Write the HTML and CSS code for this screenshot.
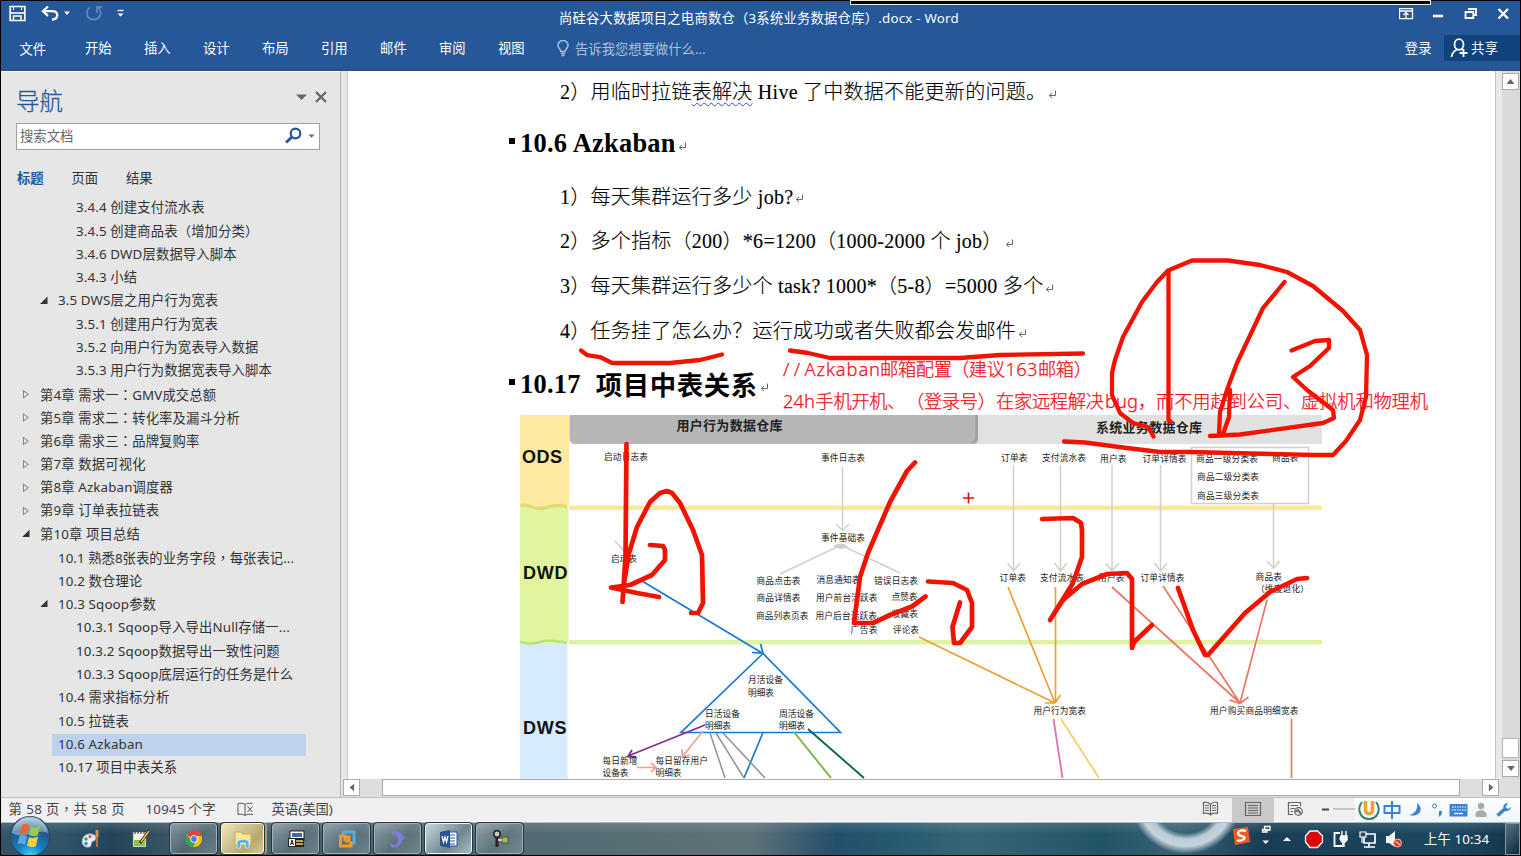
FILE: index.html
```html
<!DOCTYPE html>
<html lang="zh-CN">
<head>
<meta charset="utf-8">
<title>Word</title>
<link rel="stylesheet" href="styles.css">
</head>
<body>
<div class="window">
  <header class="titlebar">
    <svg class="quick" width="130" height="29" viewBox="1 1 130 29" fill="none" stroke="#fff">
      <path d="M10.200 6.500H24.800V20.500H10.200Z" stroke-width="1.700"/><path d="M10.500 13H24.500" stroke-width="1.600"/><path d="M13.500 20V16H21V20" stroke-width="1.500"/><path d="M13.500 7V10M21.500 7V10" stroke-width="1"/>
      <path d="M43.500 11.200H52C59 11.200 59 19 52 19.500" stroke-width="2.300"/><path d="M48 6.500L43 11.200L48 15.800" stroke-width="2.300"/>
      <path d="M64 11.500H70L67 15Z" fill="#fff" stroke="none"/>
      <path d="M90 7.500C85.500 10.500 86 18.500 92.500 19.500C101 20 103.500 10 97 7.500M97 13V7H102" stroke="#5f86bb" stroke-width="1.800"/>
      <path d="M117.500 10.500H123.500" stroke-width="1.300"/><path d="M117.500 13.500H123.500L120.500 16.500Z" fill="#fff" stroke="none"/>
    </svg>
    <div class="caption">尚硅谷大数据项目之电商数仓（3系统业务数据仓库）.docx - Word</div>
    <svg class="winbtns" width="121" height="29" viewBox="1399 1 121 29" fill="none" stroke="#fff">
      <path d="M1399.500 8.700H1412.500V18.700H1399.500ZM1400 11H1412" stroke-width="1.300"/><path d="M1406 18V12.500M1403.500 15L1406 12.500L1408.500 15" stroke-width="1.300"/>
      <path d="M1433 16H1443" stroke-width="2.600"/>
      <path d="M1468 9H1476V15H1473.500" stroke-width="1.800"/><path d="M1465.500 12H1473.300V18H1465.500Z" stroke-width="1.800"/>
      <path d="M1498.500 9L1508 18.500M1508 9L1498.500 18.500" stroke-width="2.300"/>
    </svg>
  </header>
  <nav class="ribbon">
    <span class="tab file">文件</span><span class="tab">开始</span><span class="tab">插入</span><span class="tab">设计</span><span class="tab">布局</span><span class="tab">引用</span><span class="tab">邮件</span><span class="tab">审阅</span><span class="tab">视图</span>
    <svg class="bulb" width="12" height="17" viewBox="0 0 12 17" fill="none" stroke="#a9c0df" stroke-width="1.500"><path d="M3.800 11.500C3.800 9 1 8.500 1 5.300A5 4.800 0 0 1 11 5.300C11 8.500 8.200 9 8.200 11.500ZM4 13.500H8M4.500 15.500H7.500"/></svg>
    <span class="tell">告诉我您想要做什么...</span>
    <span class="login">登录</span>
    <div class="share"><svg width="19" height="20" viewBox="0 0 19 20" fill="none" stroke="#fff" stroke-width="1.800"><ellipse cx="9" cy="6.500" rx="4.500" ry="5.300"/><path d="M1.500 19C2 15 4 13 7 11.500M11.500 10.500L13 12M13.500 11V19M9.500 15H17.500"/></svg>共享</div>
  </nav>

  <main class="main">
    <aside class="side">
      <div class="side-head"><span>导航</span>
        <svg width="34" height="14" viewBox="0 0 34 14"><path d="M2 4.500H13L7.500 10Z" fill="#666"/><path d="M22 2L32 12M32 2L22 12" stroke="#666" stroke-width="2.200"/></svg>
      </div>
      <div class="search"><span>搜索文档</span>
        <svg width="31" height="18" viewBox="0 0 31 18" fill="none"><circle cx="11.500" cy="6.500" r="4.800" stroke="#24569b" stroke-width="2.200"/><path d="M8 10L2 15.500" stroke="#24569b" stroke-width="2.800"/><path d="M24.500 7.500H30.500L27.500 10.800Z" fill="#666"/></svg>
      </div>
      <div class="views"><b>标题</b><span>页面</span><span>结果</span></div>
      <div class="tree">
        <div class="row l3">3.4.4 创建支付流水表</div>
        <div class="row l3">3.4.5 创建商品表<i lang="zh-TW">（</i>增加分类<i lang="zh-TW">）</i></div>
        <div class="row l3">3.4.6 DWD层数据导入脚本</div>
        <div class="row l3">3.4.3 小结</div>
        <div class="row l2 open">3.5 DWS层之用户行为宽表</div>
        <div class="row l3">3.5.1 创建用户行为宽表</div>
        <div class="row l3">3.5.2 向用户行为宽表导入数据</div>
        <div class="row l3">3.5.3 用户行为数据宽表导入脚本</div>
        <div class="row l1 shut">第4章 需求一<i lang="zh-TW">：</i>GMV成交总额</div>
        <div class="row l1 shut">第5章 需求二<i lang="zh-TW">：</i>转化率及漏斗分析</div>
        <div class="row l1 shut">第6章 需求三<i lang="zh-TW">：</i>品牌复购率</div>
        <div class="row l1 shut">第7章 数据可视化</div>
        <div class="row l1 shut">第8章 Azkaban调度器</div>
        <div class="row l1 shut">第9章 订单表拉链表</div>
        <div class="row l1 open">第10章 项目总结</div>
        <div class="row l2 snug">10.1 熟悉8张表的业务字段<i lang="zh-TW">，</i>每张表记...</div>
        <div class="row l2">10.2 数仓理论</div>
        <div class="row l2 open">10.3 Sqoop参数</div>
        <div class="row l3">10.3.1 Sqoop导入导出Null存储一...</div>
        <div class="row l3">10.3.2 Sqoop数据导出一致性问题</div>
        <div class="row l3">10.3.3 Sqoop底层运行的任务是什么</div>
        <div class="row l2">10.4 需求指标分析</div>
        <div class="row l2">10.5 拉链表</div>
        <div class="row l2 current">10.6 Azkaban</div>
        <div class="row l2">10.17 项目中表关系</div>
      </div>
    </aside>

    <section class="work">
      <svg width="0" height="0" class="defs"><symbol id="ret" viewBox="0 0 9 9"><path d="M7.500 0.500V5.500H1.500M4 3L1.200 5.500L4 8" fill="none" stroke="#666" stroke-width="1"/></symbol></svg>
      <div class="pane">
      <article class="page">
        <p class="para p1">2）用临时拉链<span class="wavy">表解决</span> Hive 了中数据不能更新的问题。<svg class="ret"><use href="#ret"/></svg></p>
        <h2 class="head h1">10.6 Azkaban<svg class="ret"><use href="#ret"/></svg></h2>
        <p class="para">1）每天集群运行多少 job?<svg class="ret"><use href="#ret"/></svg></p>
        <p class="para tall">2）多个指标（200）*6=1200（1000-2000 个 job）<svg class="ret"><use href="#ret"/></svg></p>
        <p class="para tall">3）每天集群运行多少个 task? 1000*（5-8）=5000 多个<svg class="ret"><use href="#ret"/></svg></p>
        <p class="para tall">4）任务挂了怎么办？运行成功或者失败都会发邮件<svg class="ret"><use href="#ret"/></svg></p>
        <h2 class="head h2">10.17<span class="zh">项目中表关系</span><svg class="ret"><use href="#ret"/></svg></h2>
        <svg class="diagram" width="802" height="364" viewBox="520 415 802 364">
          <rect x="569" y="505.500" width="753" height="4.500" fill="#fde7a0"/>
          <rect x="569" y="640" width="753" height="4.500" fill="#e0f3a5"/>
          <rect x="520" y="415" width="49" height="92" rx="2" fill="#fee9a0"/>
          <rect x="520" y="507" width="48.500" height="136" rx="2" fill="#e0f59d"/>
          <rect x="520" y="643" width="47.500" height="140" rx="2" fill="#d7ebff"/>
          <path d="M520 506Q526 504 532 507T548 507T567 507" stroke="#e3dc74" stroke-width="3.500" fill="none"/>
          <path d="M520 642Q530 645 540 642T567 643" stroke="#b8e37c" stroke-width="2.500" fill="none"/>
          <path d="M975 415H1322V444H975Z" fill="#e1e1e1"/>
          <path d="M569.500 415H978V440Q978 444 973 444H575Q569.500 444 569.500 438Z" fill="#b6b6b6"/><path d="M976.500 415V439L973 443" stroke="#a0a0a0" stroke-width="2.500" fill="none"/>
          <g class="zone"><text x="522" y="463" textLength="40">ODS</text><text x="523" y="579" textLength="44.500">DWD</text><text x="523" y="733.500" textLength="43.500">DWS</text></g>
          <g class="cap"><text x="676.500" y="429.500" textLength="106">用户行为数据仓库</text><text x="1096" y="432" textLength="106">系统业务数据仓库</text></g>
          <g fill="none" stroke="#cfcfcf" stroke-width="1.500">
            <path d="M842.500 467V530M836 524L842.500 530.500L849 524M615 541L626 553M780 574L841 545L900 573"/>
            <path d="M1013.500 465V570M1007.500 563L1013.500 571L1020 563M1060.500 465V570M1054.500 563L1060.500 571L1067 563M1112 465V570M1106 563L1112 571L1119 563M1160.500 465V570M1154.500 563L1160.500 571L1167 563M1273.500 504V568M1267 561L1273.500 568L1279.500 561"/>
            <path d="M1191.500 447.500H1308.500V503.500H1191.500Z"/>
          </g>
          <path d="M833 546Q841 541 848 546Q841 552 833 546Z" fill="#cfcfcf"/>
          <g fill="none" stroke="#1878d5" stroke-width="1.700"><path d="M642 581L763 653.500M752 652.500L763 653L760.500 644M763 653.500L681 732.500H840.500ZM763 732.500L744 778"/></g>
          <g fill="none" stroke-width="1.500">
            <path d="M705 725L628 756M632 750L628 756.500L636 757" stroke="#84308c" stroke-width="1.800"/>
            <path d="M703 731L683 756M682 749L682.500 757L690 755M637 767.500H655M651 763L656 767.500L651 772" stroke="#f5a096" stroke-width="1.700"/>
            <path d="M710 733L725 778M716 733L744 778M723 733L765 778" stroke="#929292"/>
            <path d="M794 732L831 778" stroke="#77b33e" stroke-width="1.800"/><path d="M808 729L864 778" stroke="#06654f" stroke-width="1.900"/>
            <path d="M919 637L1055 703M1008 587L1055 703M1055.500 587V703M1045 703H1055L1060.500 695" stroke="#eda02f" stroke-width="1.700"/>
            <path d="M1112 587L1240 703L1163 586M1267 600L1240 703M1229.500 700L1240 703.500L1248.500 697M1291.500 719V778" stroke="#e97767" stroke-width="1.700"/>
            <path d="M1053.500 719L1062.500 778" stroke="#df70b8" stroke-width="1.800"/><path d="M1061 719L1099 778" stroke="#f2d05d" stroke-width="1.700"/>
          </g>
          <g class="lab">
            <text x="604" y="460" textLength="44">启动日志表</text><text x="821" y="461" textLength="44">事件日志表</text><text x="821" y="540.500" textLength="44">事件基础表</text><text x="611" y="562" textLength="26">启动表</text>
            <text x="756.500" y="584" textLength="44">商品点击表</text><text x="756.500" y="601" textLength="44">商品详情表</text><text x="756" y="618.500" textLength="52.500">商品列表页表</text>
            <text x="816.500" y="583" textLength="44">消息通知表</text><text x="816" y="600.500" textLength="61.500">用户前台活跃表</text><text x="815.500" y="618.500" textLength="61.500">用户后台活跃表</text><text x="850.500" y="633" textLength="27">广告表</text>
            <text x="874" y="583.500" textLength="44">错误日志表</text><text x="891.500" y="600" textLength="26">点赞表</text><text x="891.500" y="617" textLength="26.500">收藏表</text><text x="893" y="633" textLength="26">评论表</text>
            <text x="748" y="683" textLength="35">月活设备</text><text x="748" y="695.500" textLength="26">明细表</text><text x="705" y="716.500" textLength="35">日活设备</text><text x="705" y="728.500" textLength="26">明细表</text><text x="779" y="716.500" textLength="35">周活设备</text><text x="779" y="728.500" textLength="26">明细表</text>
            <text x="602.500" y="764" textLength="35">每日新增</text><text x="602.500" y="776" textLength="26">设备表</text><text x="655.500" y="764" textLength="52.500">每日留存用户</text><text x="655.500" y="776" textLength="26">明细表</text>
            <text x="1001" y="461" textLength="26.500">订单表</text><text x="1042" y="461" textLength="44">支付流水表</text><text x="1100" y="461.500" textLength="26.500">用户表</text><text x="1142.500" y="461.500" textLength="44">订单详情表</text><text x="1196" y="461.500" textLength="62">商品一级分类表</text><text x="1272" y="461" textLength="26.500">商品表</text><text x="1197" y="479.500" textLength="62">商品二级分类表</text><text x="1197" y="498.500" textLength="62">商品三级分类表</text>
            <text x="999.500" y="581" textLength="26.500">订单表</text><text x="1040" y="581" textLength="44">支付流水表</text><text x="1098" y="581" textLength="26.500">用户表</text><text x="1140.500" y="581" textLength="44">订单详情表</text><text x="1255.500" y="579.500" textLength="26.500">商品表</text><text x="1256" y="592" textLength="53">（维度退化）</text>
            <text x="1033.500" y="714" textLength="52.500">用户行为宽表</text><text x="1210" y="714" textLength="88.500">用户购买商品明细宽表</text>
          </g>
        </svg>
      </article>
      <div class="vscroll"><span class="sb up"></span><span class="vthumb"></span><span class="sb down"></span></div>
      </div>
      <div class="hscroll"><span class="sb left"></span><span class="hthumb"></span><span class="sb right"></span></div>
    </section>
  </main>

  <footer class="status">
    <span class="s1">第 58 页<i lang="zh-TW">，</i>共 58 页</span><span class="s2">10945 个字</span>
    <svg class="proof" width="18" height="15" viewBox="0 0 18 15" fill="none" stroke="#555"><path d="M8 2.500C6 1 3 1 1 1.500V12.500C3 12 6 12 8 13.500V2.500M8 2.500C9 1.500 11 1 15.500 1.500M8 13.500C10 12 12 12 16 12.500M10.500 4.500L15.500 10M15.500 4.500L10.500 10"/></svg>
    <span class="s3">英语(美国)</span>
    <svg class="viewbtns" width="170" height="24" viewBox="1190 798 170 24" fill="none" stroke="#666" stroke-width="1.200">
      <rect x="1232" y="798" width="42" height="24" fill="#c9c9c9" stroke="none"/>
      <path d="M1210.500 804.500C1208 802 1205 802 1203.500 802.500V813.500C1206 813 1209 813 1210.500 815C1212 813 1215 813 1217.500 813.500V802.500C1215 802 1212 802 1210.500 804.500V815M1205 805.500H1209M1205 808H1209M1205 810.500H1209M1212 805.500H1216M1212 808H1216M1212 810.500H1216"/>
      <path d="M1245.500 802.500H1260.500V815.500H1245.500ZM1248 805.500H1258M1248 808H1258M1248 810.500H1258M1248 813H1258"/>
      <path d="M1293 814.500H1288.500V802.500H1300.500V806M1290.500 805.500H1298M1290.500 808.500H1295M1290.500 811.500H1293"/><circle cx="1298.500" cy="811.500" r="3.800"/><path d="M1295 812L1298 810L1301 814" stroke-width="2"/>
      <path d="M1322 809.500H1329" stroke="#444" stroke-width="2"/><path d="M1333 809H1356" stroke="#999" stroke-width="1"/>
    </svg>
  </footer>

  <footer class="taskbar">
    <div class="orbwrap"><svg class="orb" width="42" height="40" viewBox="10 815 42 40">
      <defs><radialGradient id="og" cx=".5" cy="1" r=".95"><stop offset="0" stop-color="#43d5ff"/><stop offset=".35" stop-color="#1482c6"/><stop offset=".75" stop-color="#235683"/><stop offset="1" stop-color="#9dbdcf"/></radialGradient></defs>
      <circle cx="31" cy="836.500" r="19.800" fill="url(#og)" stroke="#284c63" stroke-width="1.200"/>
      <path d="M13 833C17 811 45 811 49 833C38 828 26 840 13 833Z" fill="#cce0ea" opacity=".45"/>
      <path d="M23 825C26 823.500 28 824 30 825.500L28 834.500C26 833 23 833 21 834Z" fill="#ed6331"/><path d="M32 826C35 828 38 828 41 826L39 835C36 837 33 836 30 835Z" fill="#9bc94a"/><path d="M20.500 836C23 834.500 26 835 28 836.500L26 845C24 843.500 21 843 18.500 844Z" fill="#5ba8e5"/><path d="M30 837C33 838.500 36 838 39 836.500L37 845.500C34 848 31 847 28 845.500Z" fill="#ffd03e"/>
    </svg></div>
    <div class="pin"><svg width="20" height="20" viewBox="0 0 20 20"><path d="M1 13C1 6 7 4 11 5C17 6 15 12 13 12C10 12 11 16 9 18C5 19 1 17 1 13Z" fill="#e5eef4" stroke="#7095b0"/><circle cx="5" cy="10" r="1.700" fill="#35a855"/><circle cx="9" cy="7.500" r="1.500" fill="#e44f36"/><circle cx="5" cy="14.500" r="1.700" fill="#3585cf"/><path d="M16 1V8" stroke="#d7934b" stroke-width="3"/><path d="M16 8V18" stroke="#c46d2e" stroke-width="2"/></svg></div>
    <div class="pin"><svg width="20" height="20" viewBox="0 0 20 20"><path d="M1 3H14V18H1Z" fill="#f5f5ee" stroke="#777" stroke-width=".6"/><path d="M2 11H13V17H2Z" fill="#8cc63e"/><path d="M3 2V5M6 2V5M9 2V5M12 2V5" stroke="#333"/><path d="M17.500 1.500L8 14" stroke="#333" stroke-width="3"/><path d="M17 2L9 13" stroke="#f3bf41" stroke-width="1.500"/></svg></div>
    <div class="app"><svg width="18" height="18" viewBox="0 0 18 18"><circle cx="9" cy="9" r="8" fill="#fbc116"/><path d="M9 9L2 5A8 8 0 0 1 16.500 6H9Z" fill="#e5443a"/><path d="M2 5A8 8 0 0 0 8 17L11 11L7 11Z" fill="#32a350"/><circle cx="9" cy="9" r="3.700" fill="#fff"/><circle cx="9" cy="9" r="2.900" fill="#4083ec"/></svg></div>
    <div class="app explorer"><svg width="20" height="20" viewBox="0 0 20 20"><path d="M2 3H8L9.500 5H18V16H2Z" fill="#f7e7a0" stroke="#c4a957"/><path d="M3 7H17V15H3Z" fill="#fbe795"/><path d="M4 19V12Q10 8.500 16 12V19H12.500V14H7.500V19Z" fill="#5eb2e2" stroke="#e4f5ff" stroke-width=".6"/></svg></div>
    <div class="app"><svg width="20" height="20" viewBox="0 0 20 20"><rect x="4" y="2" width="14" height="9" fill="#fff" stroke="#222"/><rect x="6" y="4" width="10" height="4" fill="#4168b8"/><rect x="2" y="9" width="16" height="9" fill="#222"/><rect x="3" y="10" width="6" height="7" fill="#fff"/><path d="M4.500 16L6 11L7.500 16M5 14.500H7" stroke="#222" fill="none"/><path d="M10 12H17M10 15H17" stroke="#f4d64f" stroke-width="1.500"/></svg></div>
    <div class="app"><svg width="20" height="20" viewBox="0 0 20 20" fill="none" stroke-width="3"><path d="M6 6V3H17V14H14" stroke="#54aedb"/><path d="M8 12H12V8H8V12M8 7H3.500V17H14V13" stroke="#f49a27"/></svg></div>
    <div class="app"><svg width="20" height="20" viewBox="0 0 20 20"><path d="M4 2C9 1 14 4 15 7L18 9L15 10C14 15 11 18 4 19L2 15L7 16C10 14 11 11 9 8C8 6 6 5 4 5Z" fill="#817bd8"/></svg></div>
    <div class="app active"><svg width="20" height="20" viewBox="0 0 20 20"><path d="M10 3H18V17H10Z" fill="#fff" stroke="#285396"/><path d="M11 6H16M11 9H16M11 12H16M11 15H16" stroke="#285396"/><path d="M1 3L11 1V19L1 17Z" fill="#285396"/><path d="M3 7L4.500 13L6 8L7.500 13L9 7" stroke="#fff" stroke-width="1.300" fill="none"/></svg></div>
    <div class="app"><svg width="20" height="20" viewBox="0 0 20 20"><circle cx="7" cy="5" r="3.300" fill="#c9c9bd" stroke="#292424" stroke-width="1.700"/><path d="M7 8V18" stroke="#292424" stroke-width="3"/><rect x="12" y="8" width="6" height="6" fill="#a5c044" stroke="#455"/><path d="M8 11H12" stroke="#ccc" stroke-width="2"/></svg></div>
    <svg class="tray" width="180" height="32" viewBox="1230 823 180 32" fill="none">
      <path d="M1233 829L1248 827L1250 842L1235 845Z" fill="#ef5d25"/><path d="M1246 831C1240 829 1236 833 1239 835C1242 837 1246 836 1244 839C1242 841 1238 841 1237 840" stroke="#fff" stroke-width="2.200"/>
      <path d="M1264.500 826.500H1270V830H1264.500ZM1262.500 829.500H1267V832H1262.500Z" stroke="#fff" stroke-width="1.300"/><path d="M1262.500 840.500H1269L1265.700 844Z" fill="#fff"/><path d="M1283 841H1291L1287 837Z" fill="#fff"/>
      <path d="M1310 831H1317.500L1322.500 836V842L1317.500 847.500H1310L1305.500 842V836Z" fill="#d90909" stroke="#fff" stroke-width="1.300"/>
      <path d="M1340 833H1334.500V846H1343V843" stroke="#fff" stroke-width="1.800"/><path d="M1341 836H1347V840L1345 842H1342L1340 839ZM1342 836V831M1346 836V831M1344 842V847" fill="#fff" stroke="#fff" stroke-width="1.400"/>
      <path d="M1364 834H1375V843H1364ZM1369 843V847M1364 847H1375" stroke="#fff" stroke-width="1.700"/><path d="M1360 832H1366V837H1360ZM1362 837V843" fill="#284a5a" stroke="#fff" stroke-width="1.200"/>
      <path d="M1386 836H1389L1395 831V847L1389 843H1386Z" fill="#f5f5f5"/><circle cx="1397.500" cy="843" r="4" fill="#d23d2a" stroke="#ffbaa8"/><path d="M1395 841L1400 845" stroke="#fff"/>
    </svg>
    <time class="clock">上午 10:34</time>
    <div class="peek"></div>
  </footer>
</div>

<svg class="ime" width="165" height="24" viewBox="1355 798 165 24" fill="none">
  <path d="M1362 802C1356 810 1361 819 1369 819C1377 819 1382 810 1376 802" stroke="#2f8371" stroke-width="2"/><path d="M1365.500 801V810C1365.500 815 1372.500 815 1372.500 810V801" stroke="#f0a032" stroke-width="3.600"/>
  <path d="M1384.500 806H1399.500V813H1384.500ZM1392 801V819" stroke="#3c83cd" stroke-width="2"/>
  <path d="M1417 803C1425 809 1419 818 1409 815C1415 814 1418 809 1417 803Z" fill="#3c83cd"/>
  <circle cx="1434.500" cy="806" r="2" stroke="#3c83cd"/><path d="M1439 811H1442C1442 814 1441 816 1439 817" fill="#3c83cd"/>
  <rect x="1449.500" y="804" width="18" height="12.500" fill="#3c83cd"/><path d="M1452 807H1466M1452 810H1466" stroke="#fff" stroke-width="1.200" stroke-dasharray="1.500 1"/><path d="M1454 813.500H1463" stroke="#fff" stroke-width="1.300"/>
  <circle cx="1481" cy="806" r="3.200" fill="#aaa"/><path d="M1475.500 817V813Q1481 807 1486.500 813V817Z" fill="#aaa"/>
  <path d="M1497.500 815.500L1506 808" stroke="#3c83cd" stroke-width="3.600"/><path d="M1508 803C1503 803 1502 808 1505 811C1508 812 1511 809 1511 807L1508 809L1505.500 807Z" fill="#3c83cd"/>
</svg>

<div class="topstrip"></div>

<svg class="ink" width="1521" height="856" viewBox="0 0 1521 856">
  <g class="note"><text x="783" y="376" textLength="17">//</text><text x="804.500" y="376" textLength="75.500">Azkaban</text><text x="880" y="376" textLength="72">邮箱配置</text><text x="951" y="376" textLength="54">（建议</text><text x="1005.500" y="376" textLength="32">163</text><text x="1038" y="376" textLength="54">邮箱）</text><text x="783" y="408" textLength="32">24h</text><text x="815.500" y="408" textLength="90">手机开机、</text><text x="906" y="408" textLength="90">（登录号）</text><text x="996" y="408" textLength="108">在家远程解决</text><text x="1105" y="408" textLength="33">bug</text><text x="1138" y="408" textLength="290">，而不用赶到公司、虚拟机和物理机</text></g>
  <g class="pen">
    <path d="M581 350.500L587 355L600 357L612 363H670L700 360L722 354.500"/><path d="M790 350.500L808 353L830 358H960L1000 355L1083 353.500"/>
    <path d="M1153.500 436.500L1148 427L1133 423L1120 413L1112 395V373L1115 360L1123 337L1142 302L1157 282L1168 270.500L1192 260.500H1228L1260 265L1287 272L1313 286L1343 311L1360 330L1367 355L1366 397L1360 420L1346 441L1333 455H1313L1190 452H1160L1127 448L1085 442.500L1064 441.500"/>
    <path d="M1168.500 271V420L1171 422"/>
    <path d="M1284.500 282L1263 308L1237 363L1228 387L1220 412L1219 434M1230 390L1229 417L1223 434M1210 436L1240 434.500L1323 423L1334 418L1333 410L1307 390L1293 377L1310 366L1329 348V340L1315 341L1291.500 350.500"/>
    <g class="thick">
      <path d="M626.500 444L625.500 557L622.500 602M624 583L629 553L637 527L650 502L660 493L667 491L672 493L680 503L693 530L702 555L703 603L698 613H691M650 545L663 546L665 550L665 560L652 575L630 585L611 587.500L637 593L659 597"/>
      <path d="M915 462.500L907 471L890 502L868 553L860 577L854 623H873L890 615L912 606.500L925.500 596.500"/>
      <path d="M928 581.500L953 583L967 590L972 603V627L960 643H954L952.500 627L960 602.500"/>
      <path d="M1042 519L1073 518L1081 523L1082 530V557L1073 583L1050 620L1063 600L1082 584L1107 574L1127 573L1132 579V648L1134 642L1152 625"/>
      <path d="M1178 588L1193 630L1205 655H1208L1245 613L1270 592L1297 579L1307 578"/>
    </g>
  </g>
  <path d="M968.500 492.500V503.500M963 498H974" stroke="#e30d0d" stroke-width="1.700"/>
</svg>
</body>
</html>
```
FILE: styles.css
```css
* { box-sizing: border-box; }
body { margin: 0; width: 1521px; height: 856px; overflow: hidden; position: relative; background: #000; font: 13.33px "Noto Sans", "Noto Sans CJK SC", sans-serif; text-spacing-trim: space-all; color: #333; }
svg { display: block; }
i { font-style: normal; font-family: "Noto Sans CJK TC", sans-serif; }
.window { width: 1521px; height: 856px; border: 1px solid #000; display: flex; flex-direction: column; }

.titlebar { flex: none; height: 29px; background: #255799; color: #fff; display: flex; }
.quick { flex: none; }
.caption { flex: 1; padding-left: 428px; padding-top: 2px; line-height: 30px; white-space: nowrap; letter-spacing: .21px; }
.ribbon { flex: none; height: 41px; background: #255799; border-bottom: 2px solid #34507c; color: #fff; display: flex; align-items: center; padding-left: 18.500px; padding-bottom: 4px; }
.tab { width: 59px; }
.tab.file { width: 65.500px; position: relative; top: 1px; }
.bulb { margin: 2px 6px 0 0; }
.tell { color: #a9c0df; margin-top: 2px; }
.login { margin-left: auto; margin-right: 12px; letter-spacing: .3px; }
.share { width: 76px; height: 26px; background: #11427c; display: flex; align-items: center; padding-left: 6px; gap: 2px; letter-spacing: .3px; }

.main { flex: none; height: 726px; display: flex; background: #e6e6e6; }
.side { width: 340px; border-right: 1px solid #b2b2b2; border-top: 1px solid #f6f6f6; padding-left: 15px; }
.side-head { height: 52px; padding: 11px 12px 0 0; display: flex; justify-content: space-between; font-size: 23.500px; line-height: 36px; color: #24569b; font-weight: 300; -webkit-text-stroke: .25px #24569b; }
.side-head svg { margin-top: 7px; }
.search { width: 304px; height: 27px; margin-top: -1px; border: 1px solid #a0a0a0; background: #fff; display: flex; align-items: center; justify-content: space-between; padding: 0 4px 2px 3px; color: #666; }
.views { display: flex; height: 44px; align-items: flex-end; padding-bottom: 7px; gap: 27.800px; }
.views b { color: #24569b; padding-left: 1px; }
.tree { padding-top: 2px; width: 290px; }
.row { height: 23.350px; line-height: 23px; white-space: nowrap; position: relative; padding-left: 24px; letter-spacing: .14px; }
.row.snug { letter-spacing: .05px; }
.row.l2 { padding-left: 42px; }
.row.l3 { padding-left: 60px; }
.row.current { background: linear-gradient(#bdd2ef, #bdd2ef) 36px 1px / 254px 22px no-repeat; }
.open::before, .shut::before { content: ""; position: absolute; }
.open::before { left: 24px; top: 7px; width: 7.500px; height: 7.500px; background: #333; clip-path: polygon(100% 0, 100% 100%, 0 100%); }
.open.l1::before { left: 6px; }
.shut::before { left: 7px; top: 7px; width: 6px; height: 9px; background: #888; clip-path: polygon(0 0, 100% 50%, 0 100%, 0 0, 1px 2px, 1px 7px, 4.500px 50%, 1px 2px); }

.work { flex: 1; padding-left: 6px; display: flex; flex-direction: column; min-width: 0; }
.defs { position: absolute; }
.pane { height: 708px; display: flex; border-left: 1px solid #c8c8c8; overflow: hidden; }
.page { flex: none; width: 1147px; background: #fff; padding-left: 172px; color: #000; }
.para, .head { margin: 0; display: flex; align-items: center; white-space: pre; font-family: "Liberation Serif", "Noto Sans CJK SC", serif; }
.para { padding-left: 40px; padding-bottom: 2px; height: 44px; font-size: 20px; letter-spacing: .26px; font-weight: 300; -webkit-text-stroke: .12px #000; }
.para.p1 { height: 41px; }
.para.tall { height: 45px; }
.wavy { text-decoration: underline wavy #3547d8 1px; text-underline-offset: 3px; }
.head { font-size: 26.400px; font-weight: 700; position: relative; letter-spacing: .27px; }
.head::before { content: ""; position: absolute; left: -11px; top: 26px; width: 6px; height: 6px; background: #000; }
.h1 { height: 62px; }
.h2 { height: 62px; }
.zh { margin-left: 15px; letter-spacing: .6px; position: relative; top: -1px; }
.ret { width: 9px; height: 9px; margin: 7px 0 0 2px; flex: none; }
.diagram { overflow: hidden; }
.zone { font: 700 18px "Liberation Sans", sans-serif; fill: #111; }
.cap { font: 700 13px "Noto Sans CJK SC", sans-serif; fill: #222; }
.lab { font: 400 8.700px "Noto Sans CJK SC", sans-serif; fill: #222; }

.vscroll { flex: 1; border-left: 1px solid #c4c4c4; background: linear-gradient(90deg, #e9e9e9 6px, #dadada 6px); display: flex; flex-direction: column; padding: 2px 0 2px 6px; align-items: flex-start; }
.sb { width: 17px; height: 17px; background: #fff; border: 1px solid #aaa; display: grid; place-items: center; flex: none; }
.sb::after { content: ""; width: 8px; height: 5px; background: #666; clip-path: polygon(50% 0, 100% 100%, 0 100%); }
.down::after { transform: rotate(180deg); }
.left::after { transform: rotate(-90deg); }
.right::after { transform: rotate(90deg); }
.vthumb { width: 17px; height: 20px; margin-top: auto; margin-bottom: 2px; background: #fff; border: 1px solid #b4b4b4; }
.hscroll { height: 18px; display: flex; background: #dedede; margin-left: -4px; }
.hthumb { width: 1078px; height: 17px; margin-left: 22px; margin-right: 22px; background: #fff; border: 1px solid #aaa; }

.status { flex: none; height: 25px; background: #f0f0f0; border-top: 1px solid #bdbdbd; border-bottom: 1px solid #fff; display: flex; align-items: center; padding-left: 7.500px; color: #444; }
.status span { position: relative; top: -1px; }
.s1 { width: 137px; white-space: nowrap; letter-spacing: .42px; }
.s2 { width: 91px; letter-spacing: .25px; }
.s3 { margin-left: 17px; }
.viewbtns { margin-left: auto; margin-right: 160px; }
.taskbar { flex: none; height: 33px; border-top: 1px solid #a7bac2; display: flex; background: radial-gradient(ellipse 54px 50px at 1185px -19px, transparent 58%, #b8ccd6 70%, #c6d5dc 84%, transparent 100%), linear-gradient(180deg, rgba(255,255,255,.13), transparent 35%), linear-gradient(90deg, #315469 0, #315469 60px, #234459 110px, #455d69 200px, #526b73 540px, #5f7277 750px, #244f6b 835px, #265b70 900px, #376577 970px, #225468 1100px, #376274 1180px, #183e56 1260px, #1c4860 1450px, #123449 1521px); color: #fff; }
.orbwrap { width: 64px; flex: none; position: relative; }
.orb { position: absolute; left: 8px; top: -8px; }
.pin { width: 51px; display: grid; place-items: center; flex: none; }
.app { flex: none; width: 47px; height: 31px; margin-left: 4px; border: 1px solid #9fb1b8; outline: 1px solid #21363f; border-radius: 3px; background: linear-gradient(135deg, rgba(255,255,255,.35), rgba(255,255,255,.08) 55%, rgba(255,255,255,.2)); display: grid; place-items: center; }
.pin + .app { margin-left: 3px; }
.explorer { width: 43px; margin-right: 4px; border-color: #fff5ce; background: linear-gradient(135deg, #efe6bc, #b5a96e 70%, #d9cd94); box-shadow: 3px 0 #a99e72; }
.active { background: linear-gradient(135deg, #c9d6da, #70868e 60%, #a9bac0); border-color: #edf5f7; }
.tray { margin-left: auto; }
.clock { width: 95px; padding-left: 14px; line-height: 32px; white-space: nowrap; letter-spacing: .15px; }
.peek { width: 15px; border: 1px solid #7d98a5; background: linear-gradient(135deg, #587382, #0b293a); }

.ime { position: absolute; left: 1355px; top: 798px; background: linear-gradient(#fff, #eef5fb); }
.topstrip { position: absolute; left: 850px; top: 0; width: 581px; height: 5px; background: #000; border: 1px solid #eee; }
.ink { position: absolute; left: 0; top: 0; pointer-events: none; }
.note { font: 300 18.300px "Noto Sans", "Noto Sans CJK SC", sans-serif; fill: #ee101b; stroke: #ee101b; stroke-width: .25px; }
.pen { fill: none; stroke: #f01400; stroke-width: 4.300; stroke-linecap: round; stroke-linejoin: round; }
.thick { stroke-width: 4.700; }
```
